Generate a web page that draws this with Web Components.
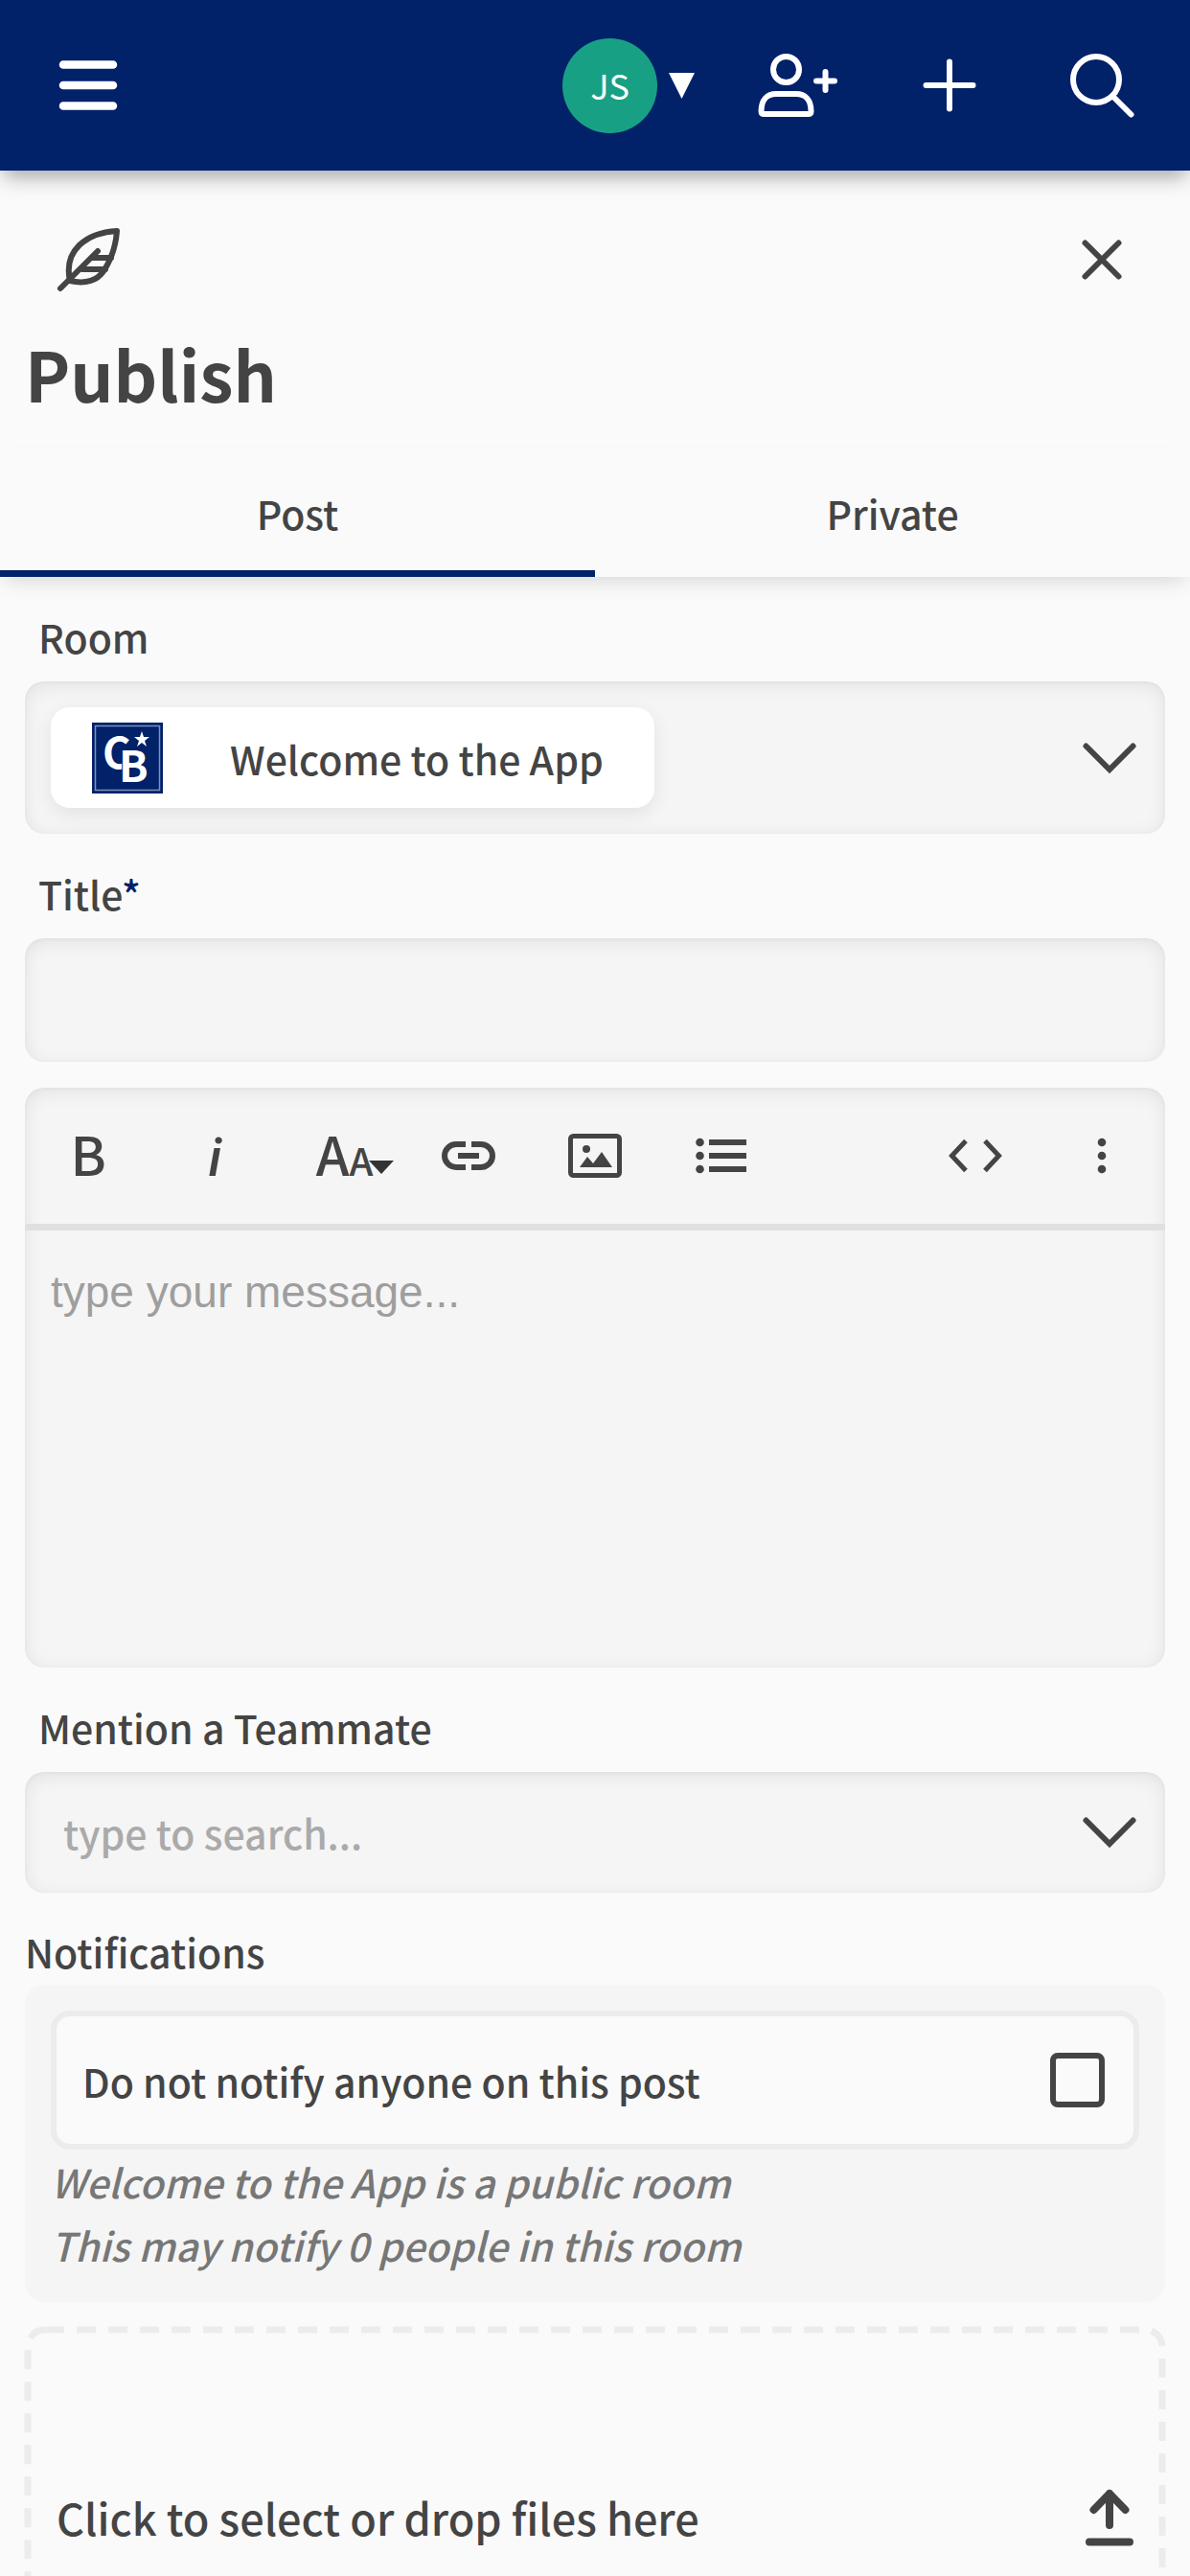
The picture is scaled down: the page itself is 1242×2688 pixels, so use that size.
<!DOCTYPE html>
<html lang="en">
<head>
<meta charset="utf-8">
<meta name="viewport" content="width=device-width, initial-scale=1">
<title>Publish</title>
<style>
    :root {
        --navy: #012169;
        --page: #fafafa;
        --field: #f5f5f5;
        --line: #ececec;
        --text: #444;
        --muted: #aaa;
        --edge: 26px;
        --radius: 20px;
        --inset: inset 0 4px 20px rgba(0, 0, 0, .08), inset 0 1px 4px rgba(0, 0, 0, .04);
    }
    body {
        margin: 0;
        height: 100vh;
        display: flex;
        flex-direction: column;
        background: var(--page);
        color: var(--text);
        font: 500 41px/48px "Noto Sans CJK SC", sans-serif;
    }
    main {
        flex: 1;
        min-height: 0;
        overflow-y: auto;
        scrollbar-width: none;
    }
    form {
        display: flex;
        flex-direction: column;
        padding: 0 var(--edge) var(--edge);
    }
</style>
</head>
<body>
    <app-header initials="JS"></app-header>
    <main>
        <panel-head>Publish</panel-head>
        <tab-bar tabs="Post,Private"></tab-bar>
        <form>
            <room-field label="Room" value="Welcome to the App"></room-field>
            <title-field label="Title"></title-field>
            <message-editor placeholder="type your message..."></message-editor>
            <mention-field label="Mention a Teammate" placeholder="type to search..."></mention-field>
            <notify-panel heading="Notifications" label="Do not notify anyone on this post">
                <div>Welcome to the App is a public room</div>
                <div>This may notify 0 people in this room</div>
            </notify-panel>
            <file-drop>Click to select or drop files here</file-drop>
        </form>
    </main>

<script>
// --- Icons: width, height, markup ---
const ICONS = {
    menu: [60, 52, '<path d="M4 4.500h52M4 26h52M4 47.500h52" stroke-width="8.500"/>'],
    caret: [27, 27, '<path d="M0 0h27L13.500 27z" fill="currentColor" stroke="none"/>'],
    invite: [84, 66, `
        <circle cx="30.500" cy="16.500" r="13.500"/>
        <path d="M4.500 60C4.500 48 11 42 20 42h21c9 0 15.500 6 15.500 18 0 2-1 3-3 3h-46c-2 0-3-1-3-3z"/>
        <path d="M62 28.500h19M71.500 19v19"/>`],
    plus: [56, 56, '<path d="M3.500 28h49M28 3.500v49"/>'],
    search: [67, 67, '<circle cx="27" cy="27" r="24"/><path d="M44 44l19.500 19.500"/>'],
    feather: [67, 67, `
        <path d="M63 3C31 5 7 23 14 55c17 4 29-1 35-10C57 33 62 17 63 3z"/>
        <path d="M4 63L43 24M37 31h20M27 43h24"/>`],
    close: [42, 42, '<path d="M3.500 3.500l35 35M38.500 3.500l-35 35"/>'],
    chevron: [56, 32, '<path d="M3.500 3.500L28 28 52.500 3.500" stroke-linejoin="miter"/>'],
    link: [56, 30, `
        <path d="M25 3H15a12 12 0 0 0 0 24h10M31 3h10a12 12 0 0 1 0 24H31" stroke-linecap="butt"/>
        <path d="M17 15h22" stroke-linecap="butt"/>`],
    image: [56, 48, `
        <rect x="2.500" y="3.500" width="51" height="41" rx="3" stroke-width="5"/>
        <circle cx="19" cy="17" r="4" fill="currentColor" stroke="none"/>
        <path d="M12 36l8-11 6 7 9-12 11 16z" fill="currentColor" stroke="none"/>`],
    list: [54, 40, `
        <path d="M14 6h39M14 20h39M14 34h39" stroke-linecap="butt"/>
        <g fill="currentColor" stroke="none"><circle cx="4.500" cy="6" r="4.300"/><circle cx="4.500" cy="20" r="4.300"/><circle cx="4.500" cy="34" r="4.300"/></g>`],
    code: [56, 36, '<path d="M18 2.500L3.500 18 18 33.500M38 2.500L52.500 18 38 33.500" stroke-width="5" stroke-linecap="butt" stroke-linejoin="miter"/>'],
    more: [10, 40, '<g fill="currentColor" stroke="none"><circle cx="5" cy="6" r="4.300"/><circle cx="5" cy="20" r="4.300"/><circle cx="5" cy="34" r="4.300"/></g>'],
    drop: [26, 14, '<path d="M0 0h26L13 14z" fill="currentColor" stroke="none"/>'],
    upload: [50, 60, '<path d="M4 55.500h42M25 38V5M8.500 22L25 5l16.500 17" stroke-width="8"/>'],
    // navy tile with the framed monogram
    room: [74, 74, `
        <rect width="74" height="74" fill="#012169" stroke="none"/>
        <rect x="3.500" y="3.500" width="67" height="67" stroke="#7f8fc0" stroke-width="1.500" stroke-linejoin="miter"/>
        <g fill="#fff" stroke="none">
            <text x="11 28" y="48 62" font-size="45" font-weight="700" stroke="#012169" stroke-width="2" paint-order="stroke">CB</text>
            <path d="M52 9l2 6h6l-5 4 2 6-5-4-5 4 2-6-5-4h6z"/>
        </g>`],
};

class AppIcon extends HTMLElement {
    connectedCallback() {
        const [w, h, body] = ICONS[this.getAttribute('name')];
        this.attachShadow({ mode: 'open' }).innerHTML = `
            <style>
                :host { display: inline-flex; flex: none; }
                svg { display: block; overflow: visible; }
            </style>
            <svg width="${w}" height="${h}" viewBox="0 0 ${w} ${h}" fill="none" stroke="currentColor"
                 stroke-width="6" stroke-linecap="round" stroke-linejoin="round" aria-hidden="true">${body}</svg>
        `;
    }
}
customElements.define('app-icon', AppIcon);

// --- Shared styles ---
const BASE = `
    * { box-sizing: border-box; }
    button, input, select, textarea {
        margin: 0;
        padding: 0;
        border: 0;
        border-radius: 0;
        background: none;
        color: inherit;
        font: inherit;
        appearance: none;
        outline: none;
    }
    button { cursor: pointer; }
`;

const FIELD = `
    :host { display: block; padding-top: 38px; }
    label { display: block; margin: 0 14px 23px; }
    .box {
        display: flex;
        align-items: center;
        justify-content: space-between;
        padding: 27px;
        border-radius: var(--radius);
        background: var(--field);
        box-shadow: var(--inset);
    }
    .box > app-icon { margin-right: 3px; pointer-events: none; }
`;

// --- Header ---
class AppHeader extends HTMLElement {
    connectedCallback() {
        this.attachShadow({ mode: 'open' }).innerHTML = `
            <style>
                ${BASE}
                :host { display: block; position: relative; z-index: 1; flex: none; }
                header {
                    display: flex;
                    align-items: center;
                    gap: 27px;
                    height: 178px;
                    padding: 0 var(--edge);
                    background: var(--navy);
                    color: #fff;
                    box-shadow: 0 10px 20px -4px rgba(0, 0, 0, .35);
                }
                button { display: flex; align-items: center; justify-content: center; width: 132px; height: 132px; }
                .user { gap: 12px; width: auto; padding: 0 14px; margin: 0 -27px 0 auto; }
                .user + button { margin-left: 27px; }
                .avatar {
                    width: 99px;
                    padding-bottom: 3px;
                    border-radius: 50%;
                    background: #18a085;
                    font-size: 36px;
                    font-weight: 400;
                    line-height: 96px;
                }
            </style>
            <header>
                <button type="button" aria-label="Menu"><app-icon name="menu"></app-icon></button>
                <button type="button" class="user">
                    <span class="avatar">${this.getAttribute('initials')}</span>
                    <app-icon name="caret"></app-icon>
                </button>
                <button type="button" aria-label="Invite"><app-icon name="invite"></app-icon></button>
                <button type="button" aria-label="New"><app-icon name="plus"></app-icon></button>
                <button type="button" aria-label="Search"><app-icon name="search"></app-icon></button>
            </header>
        `;
    }
}
customElements.define('app-header', AppHeader);

// --- Panel heading ---
class PanelHead extends HTMLElement {
    connectedCallback() {
        this.attachShadow({ mode: 'open' }).innerHTML = `
            <style>
                ${BASE}
                :host { display: block; padding: 27px var(--edge) 0; }
                .row { display: flex; justify-content: space-between; }
                .cell { display: flex; align-items: center; justify-content: center; width: 132px; height: 132px; }
                h1 { margin: 12px 0 0; font-size: 71px; line-height: 80px; }
            </style>
            <div class="row">
                <span class="cell"><app-icon name="feather"></app-icon></span>
                <button type="button" class="cell" aria-label="Close"><app-icon name="close"></app-icon></button>
            </div>
            <h1><slot></slot></h1>
        `;
    }
}
customElements.define('panel-head', PanelHead);

// --- Tabs ---
class TabBar extends HTMLElement {
    connectedCallback() {
        const tabs = this.getAttribute('tabs').split(',');
        this.attachShadow({ mode: 'open' }).innerHTML = `
            <style>
                ${BASE}
                :host { display: block; margin-top: 39px; }
                [role=tablist] { display: flex; box-shadow: 0 10px 20px -6px rgba(0, 0, 0, .14); }
                button { flex: 1; height: 134px; }
                [aria-selected=true] { box-shadow: inset 0 -7px var(--navy); }
            </style>
            <div role="tablist">
                ${tabs.map((t, i) => `<button type="button" role="tab" aria-selected="${i === 0}">${t}</button>`).join('')}
            </div>
        `;
        const buttons = this.shadowRoot.querySelectorAll('button');
        buttons.forEach(b => b.addEventListener('click', () => {
            buttons.forEach(o => o.setAttribute('aria-selected', o === b));
        }));
    }
}
customElements.define('tab-bar', TabBar);

// --- Fields ---
class RoomField extends HTMLElement {
    connectedCallback() {
        this.attachShadow({ mode: 'open' }).innerHTML = `
            <style>
                ${BASE}
                ${FIELD}
                .chip {
                    display: flex;
                    align-items: center;
                    gap: 70px;
                    height: 105px;
                    padding: 0 53px 0 43px;
                    border-radius: var(--radius);
                    background: #fff;
                    box-shadow: 0 6px 20px rgba(0, 0, 0, .08);
                }
                select { height: 64px; line-height: 64px; }
            </style>
            <label for="room">${this.getAttribute('label')}</label>
            <div class="box">
                <div class="chip">
                    <app-icon name="room"></app-icon>
                    <select id="room"><option>${this.getAttribute('value')}</option></select>
                </div>
                <app-icon name="chevron"></app-icon>
            </div>
        `;
    }
}
customElements.define('room-field', RoomField);

class TitleField extends HTMLElement {
    connectedCallback() {
        this.attachShadow({ mode: 'open' }).innerHTML = `
            <style>
                ${BASE}
                ${FIELD}
                label span { color: var(--navy); }
                input { width: 100%; height: 129px; }
            </style>
            <label for="title">${this.getAttribute('label')}<span>*</span></label>
            <input id="title" class="box" type="text" required>
        `;
    }
}
customElements.define('title-field', TitleField);

class MentionField extends HTMLElement {
    connectedCallback() {
        this.attachShadow({ mode: 'open' }).innerHTML = `
            <style>
                ${BASE}
                ${FIELD}
                .box { height: 126px; padding-left: 40px; }
                input { flex: 1; min-width: 0; height: 64px; }
                input::placeholder { color: var(--muted); opacity: 1; }
            </style>
            <label for="mention">${this.getAttribute('label')}</label>
            <div class="box">
                <input id="mention" type="text" placeholder="${this.getAttribute('placeholder')}">
                <app-icon name="chevron"></app-icon>
            </div>
        `;
    }
}
customElements.define('mention-field', MentionField);

// --- Editor ---
class MessageEditor extends HTMLElement {
    connectedCallback() {
        this.attachShadow({ mode: 'open' }).innerHTML = `
            <style>
                ${BASE}
                :host {
                    display: block;
                    margin-top: 27px;
                    border-radius: var(--radius);
                    background: var(--field);
                    box-shadow: var(--inset);
                }
                .tools {
                    display: grid;
                    grid-template-columns: repeat(9, 1fr);
                    border-bottom: 7px solid #e0e0e0;
                }
                .tools button {
                    display: flex;
                    align-items: center;
                    justify-content: center;
                    height: 142px;
                }
                .tools .letter {
                    position: relative;
                    align-items: baseline;
                    font-size: 56px;
                    line-height: 136px;
                }
                .letter i { font-family: Roboto, sans-serif; }
                .size { padding-left: 6px; }
                .size small { font-size: 40px; }
                .size app-icon { position: absolute; left: 95px; top: 76px; color: #333; }
                .code { grid-column: 8; }
                textarea {
                    display: block;
                    width: 100%;
                    height: 456px;
                    padding: 38px 27px;
                    font: 400 46px/52px "Liberation Sans", sans-serif;
                    resize: none;
                }
                textarea::placeholder { color: #9e9e9e; opacity: 1; }
            </style>
            <div class="tools">
                <button type="button" class="letter" aria-label="Bold">B</button>
                <button type="button" class="letter" aria-label="Italic"><span><i>i</i></span></button>
                <button type="button" class="letter size" aria-label="Text size">A<small>A</small><app-icon name="drop"></app-icon></button>
                <button type="button" aria-label="Link"><app-icon name="link"></app-icon></button>
                <button type="button" aria-label="Image"><app-icon name="image"></app-icon></button>
                <button type="button" aria-label="List"><app-icon name="list"></app-icon></button>
                <button type="button" class="code" aria-label="Code"><app-icon name="code"></app-icon></button>
                <button type="button" aria-label="More"><app-icon name="more"></app-icon></button>
            </div>
            <textarea aria-label="Message" placeholder="${this.getAttribute('placeholder')}"></textarea>
        `;
    }
}
customElements.define('message-editor', MessageEditor);

// --- Notifications ---
class NotifyPanel extends HTMLElement {
    connectedCallback() {
        this.attachShadow({ mode: 'open' }).innerHTML = `
            <style>
                ${BASE}
                :host { display: block; padding-top: 37px; }
                h2 { margin: 0 0 11px; font: inherit; }
                .panel { padding: 27px; border-radius: var(--radius); background: var(--field); }
                label {
                    display: flex;
                    align-items: center;
                    justify-content: space-between;
                    height: 145px;
                    padding: 0 30px 0 27px;
                    border: 6px solid var(--line);
                    border-radius: var(--radius);
                    background: var(--page);
                }
                input { width: 57px; height: 57px; border: 6px solid var(--text); border-radius: 8px; }
                input:checked { background: var(--text); }
                .hint { color: #777; font-style: italic; line-height: 66px; }
            </style>
            <h2>${this.getAttribute('heading')}</h2>
            <div class="panel">
                <label>${this.getAttribute('label')}<input type="checkbox"></label>
                <div class="hint"><slot></slot></div>
            </div>
        `;
    }
}
customElements.define('notify-panel', NotifyPanel);

// --- File drop zone ---
class FileDrop extends HTMLElement {
    connectedCallback() {
        this.attachShadow({ mode: 'open' }).innerHTML = `
            <style>
                ${BASE}
                :host { display: block; padding-top: 26px; }
                label {
                    position: relative;
                    display: flex;
                    align-items: center;
                    justify-content: space-between;
                    height: 398px;
                    padding: 0 33px;
                    font-size: 45px;
                    cursor: pointer;
                }
                svg { position: absolute; inset: 0; width: 100%; height: 100%; overflow: visible; }
                rect {
                    x: 3px;
                    y: 3px;
                    width: calc(100% - 6px);
                    height: calc(100% - 6px);
                    fill: none;
                    stroke: var(--line);
                    stroke-width: 7px;
                    stroke-dasharray: 20 13;
                }
                input { position: absolute; width: 1px; height: 1px; opacity: 0; }
            </style>
            <label>
                <svg aria-hidden="true"><rect rx="18"/></svg>
                <span><slot></slot></span>
                <input type="file" multiple>
                <app-icon name="upload"></app-icon>
            </label>
        `;
    }
}
customElements.define('file-drop', FileDrop);
</script>
</body>
</html>
